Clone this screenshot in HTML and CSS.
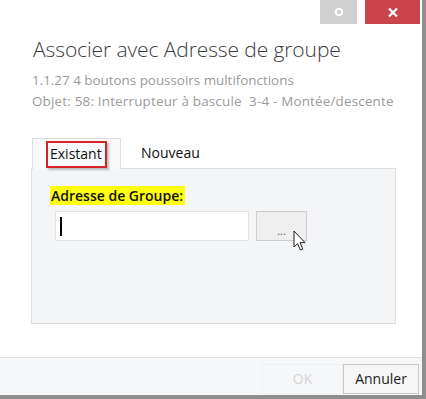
FILE: index.html
```html
<!DOCTYPE html>
<html lang="fr">
<head>
	<meta charset="UTF-8">
	<title>Associer avec Adresse de groupe</title>
	<link rel="stylesheet" href="styles.css">
</head>
<body>
	<div class="dialog">
		<div class="titlebar">
			<button class="win-btn btn-gear">
				<svg width="10" height="10" viewBox="0 0 10 10"><circle cx="5" cy="5" r="3.3" fill="none" stroke="#fff" stroke-width="2"/></svg>
			</button>
			<button class="win-btn btn-close">
				<svg width="10" height="9" viewBox="0 0 10 9"><path d="M1 0.5 L9 8.5 M9 0.5 L1 8.5" stroke="#fff" stroke-width="2.2"/></svg>
			</button>
		</div>

		<div class="content">
			<h1 class="title">Associer avec Adresse de groupe</h1>
			<div class="sub">1.1.27 4 boutons poussoirs multifonctions</div>
			<div class="sub">Objet: 58: Interrupteur à bascule&nbsp; 3-4 - Montée/descente</div>

			<div class="tabs">
				<div class="tab active"><span class="mark">Existant</span></div>
				<div class="tab">Nouveau</div>
			</div>
			<div class="panel">
				<div class="label"><span class="hl">Adresse de Groupe:</span></div>
				<div class="row">
					<div class="input"><span class="caret"></span></div>
					<button class="browse">...</button>
					<svg class="pointer" width="14" height="22" viewBox="0 0 14 22">
						<path d="M1 1 L1 17 L4.6 13.6 L7.4 20 L9.8 19 L7.1 12.6 L12 12.6 Z" fill="#fff" stroke="#222" stroke-width="1" stroke-linejoin="round"/>
					</svg>
				</div>
			</div>
		</div>

		<div class="footer">
			<button class="btn disabled">OK</button>
			<button class="btn">Annuler</button>
		</div>
	</div>
</body>
</html>
```

FILE: styles.css
```css
* {
	margin: 0;
	padding: 0;
	box-sizing: border-box;
}

body {
	width: 426px;
	height: 399px;
	background: #ffffff;
	font-family: "Open Sans", "Noto Sans", sans-serif;
	overflow: hidden;
}

.dialog {
	width: 426px;
	height: 399px;
	display: flex;
	flex-direction: column;
	background: #ffffff;
	border-right: 4px solid #8e8e8e;
	border-bottom: 4px solid #8e8e8e;
}

.titlebar {
	height: 24px;
	display: flex;
	justify-content: flex-end;
	gap: 8px;
	padding-right: 2px;
}

.win-btn {
	border: none;
	height: 24px;
	display: flex;
	align-items: center;
	justify-content: center;
}

.btn-gear {
	width: 37px;
	background: #d0d0d0;
}

.btn-close {
	width: 55px;
	background: #c9454b;
}

.content {
	flex: 1;
	padding: 11px 26px 0 31px;
}

.title {
	font-weight: 300;
	font-size: 21px;
	color: #3c3c3c;
	line-height: 28px;
	margin: 0 0 7px 2px;
	letter-spacing: -0.1px;
}

.sub {
	font-size: 13.4px;
	color: #9a9a9a;
	line-height: 21px;
	margin-left: 1px;
	white-space: nowrap;
}

.sub + .sub {
	letter-spacing: 0.2px;
}

.tabs {
	display: flex;
	margin-top: 25px;
	height: 31px;
	align-items: flex-end;
}

.tab {
	height: 31px;
	padding: 0 18px 0 14px;
	display: flex;
	align-items: center;
	font-size: 14px;
	color: #111;
}

.tab.active {
	border: 1px solid #dedede;
	border-bottom: none;
	background: #f8f9fa;
	width: 89px;
	padding: 0 0 0 13px;
	margin-left: 1px;
	position: relative;
	top: 1px;
}

.mark {
	border: 2px solid #d8202a;
	padding: 2px 3px 3px 2px;
	line-height: 18px;
	box-shadow: 2px 2px 2px rgba(0, 0, 0, 0.25);
}

.tab:not(.active) {
	padding-left: 20px;
}

.panel {
	height: 156px;
	background: #f4f5f7;
	border: 1px solid #dedede;
	padding: 17px 0 0 18px;
}

.label {
	font-size: 14px;
	font-weight: 600;
	color: #111;
	line-height: 20px;
}

.hl {
	background: #ffff10;
	padding: 0 2px 0 1px;
}

.row {
	display: flex;
	align-items: flex-start;
	gap: 7px;
	margin-top: 5px;
	margin-left: 5px;
	position: relative;
}

.input {
	width: 194px;
	height: 30px;
	background: #fff;
	border: 1px solid #e2e2e2;
	padding: 5px 0 0 4px;
}

.caret {
	display: block;
	width: 2px;
	height: 19px;
	background: #000;
}

.browse {
	width: 51px;
	height: 30px;
	background: #efefef;
	border: 1px solid #cfcfcf;
	font-family: inherit;
	font-size: 11px;
	color: #666;
	padding-top: 8px;
}

.pointer {
	position: absolute;
	left: 238px;
	top: 19px;
}

.footer {
	height: 38px;
	border-top: 1px solid #e0e0e0;
	background: #f6f7f9;
	display: flex;
	justify-content: flex-end;
	align-items: center;
	padding-right: 3px;
	padding-top: 4px;
}

.btn {
	width: 76px;
	height: 30px;
	font-family: inherit;
	font-size: 14px;
	background: #f6f6f6;
	border: 1px solid #c9c9c9;
	color: #222;
}

.btn.disabled {
	width: 81px;
	color: #d4d4d4;
	border-color: #f0f0f0;
	background: #f6f7f9;
}
```
